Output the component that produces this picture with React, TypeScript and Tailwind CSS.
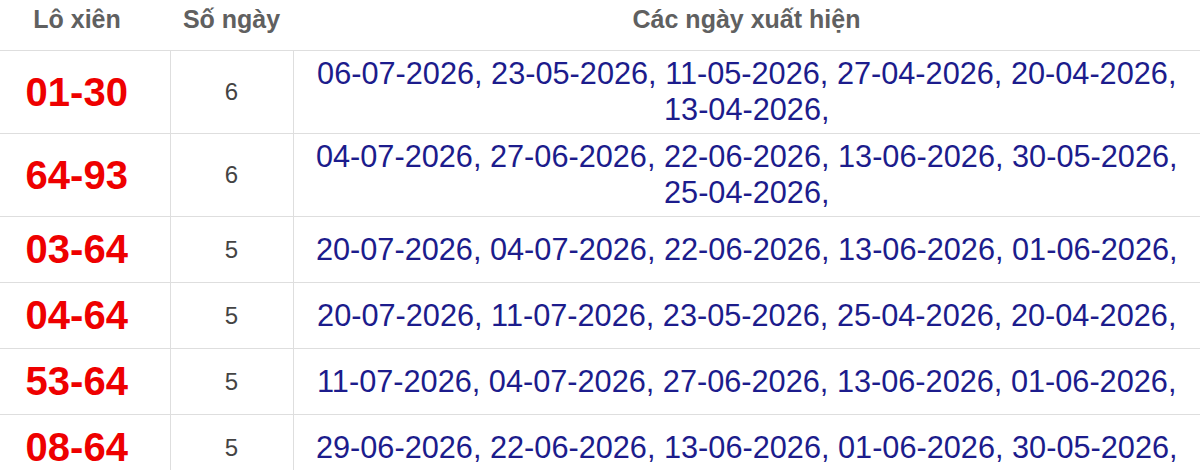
import React from 'react';

const rows = [
  { pair: '01-30', days: 6, dates: ['06-07-2026', '23-05-2026', '11-05-2026', '27-04-2026', '20-04-2026', '13-04-2026'] },
  { pair: '64-93', days: 6, dates: ['04-07-2026', '27-06-2026', '22-06-2026', '13-06-2026', '30-05-2026', '25-04-2026'] },
  { pair: '03-64', days: 5, dates: ['20-07-2026', '04-07-2026', '22-06-2026', '13-06-2026', '01-06-2026'] },
  { pair: '04-64', days: 5, dates: ['20-07-2026', '11-07-2026', '23-05-2026', '25-04-2026', '20-04-2026'] },
  { pair: '53-64', days: 5, dates: ['11-07-2026', '04-07-2026', '27-06-2026', '13-06-2026', '01-06-2026'] },
  { pair: '08-64', days: 5, dates: ['29-06-2026', '22-06-2026', '13-06-2026', '01-06-2026', '30-05-2026'] },
];

export default function App() {
  return (
    <div className="w-[1200px] h-[470px] overflow-hidden bg-white font-['Liberation_Sans',Arial,sans-serif]">
      <table className="w-[1200px] table-fixed border-collapse">
        <colgroup>
          <col className="w-[170px]" />
          <col className="w-[123px]" />
          <col />
        </colgroup>
        <thead>
          <tr className="border-b border-[#dedede]">
            <th className="pt-[4px] pb-[16px] pr-4 text-[25px] leading-[30px] font-bold text-[#606060] text-center">Lô xiên</th>
            <th className="pt-[4px] pb-[16px] text-[25px] leading-[30px] font-bold text-[#606060] text-center">Số ngày</th>
            <th className="pt-[4px] pb-[16px] text-[25px] leading-[30px] font-bold text-[#606060] text-center">Các ngày xuất hiện</th>
          </tr>
        </thead>
        <tbody>
          {rows.map((r) => (
            <tr key={r.pair} className="border-b border-[#dedede]">
              <td className="py-[8px] pr-4 text-center align-middle text-[40px] leading-[49px] font-bold text-[#ee0000]">
                {r.pair}
              </td>
              <td className="border-l border-[#dedede] text-center align-middle text-[24px] text-[#444444]">
                {r.days}
              </td>
              <td className="border-l border-[#dedede] px-[8px] py-[5px] text-center align-middle text-[30.7px] leading-[36px] text-[#1c1c8c]">
                {r.dates.map((d) => d + ', ').join('')}
              </td>
            </tr>
          ))}
        </tbody>
      </table>
    </div>
  );
}
